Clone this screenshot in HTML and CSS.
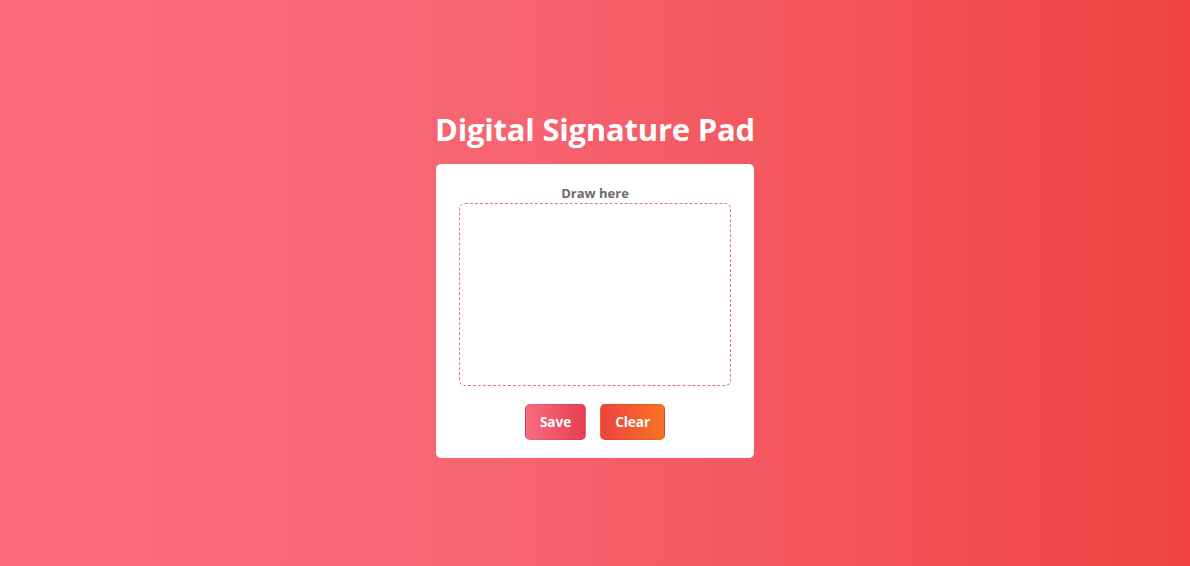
FILE: index.html
```html
<!DOCTYPE html>
<html lang="en">
<head>
<meta charset="utf-8">
<title>Digital Signature Pad</title>
<link rel="stylesheet" href="styles.css">
</head>
<body>
<main class="page">
  <h1 class="title">Digital Signature Pad</h1>
  <section class="card">
    <div class="label">Draw here</div>
    <div class="pad"></div>
    <div class="actions">
      <button class="btn btn-save">Save</button>
      <button class="btn btn-clear">Clear</button>
    </div>
  </section>
</main>
</body>
</html>
```
FILE: styles.css
```css
html, body {
  margin: 0;
  padding: 0;
  height: 100%;
}
body {
  font-family: "Open Sans", "Noto Sans", sans-serif;
  background: linear-gradient(90deg, #ff6c80 0%, #f76573 40%, #ef4343 100%);
}
.page {
  min-height: 100vh;
  display: flex;
  flex-direction: column;
  align-items: center;
  justify-content: center;
  box-sizing: border-box;
  padding-top: 0;
}
.title {
  margin: 0 0 15px;
  color: #fff;
  font-size: 31px;
  font-weight: 700;
  line-height: 40px;
  letter-spacing: -0.2px;
}
.card {
  width: 318px;
  box-sizing: border-box;
  background: #fff;
  border-radius: 5px;
  padding: 20px 22px 18px;
  display: flex;
  flex-direction: column;
  align-items: center;
}
.label {
  color: #6b6b6b;
  font-size: 13px;
  font-weight: 700;
  line-height: 18px;
  margin-bottom: 1px;
}
.pad {
  width: 272px;
  height: 183px;
  box-sizing: border-box;
  border: 1px dashed #d9788f;
  border-radius: 6px;
}
.actions {
  display: flex;
  gap: 14px;
  margin-top: 18px;
}
.btn {
  font-family: inherit;
  font-size: 13.5px;
  font-weight: 700;
  color: #fff;
  height: 36px;
  padding: 0 14px;
  border: 1px solid rgba(0,0,0,0.06);
  border-radius: 5px;
  cursor: pointer;
}
.btn-save {
  background: linear-gradient(90deg, #f96c82, #e73e4e);
}
.btn-clear {
  background: linear-gradient(90deg, #ee4242, #f77421);
}
```
